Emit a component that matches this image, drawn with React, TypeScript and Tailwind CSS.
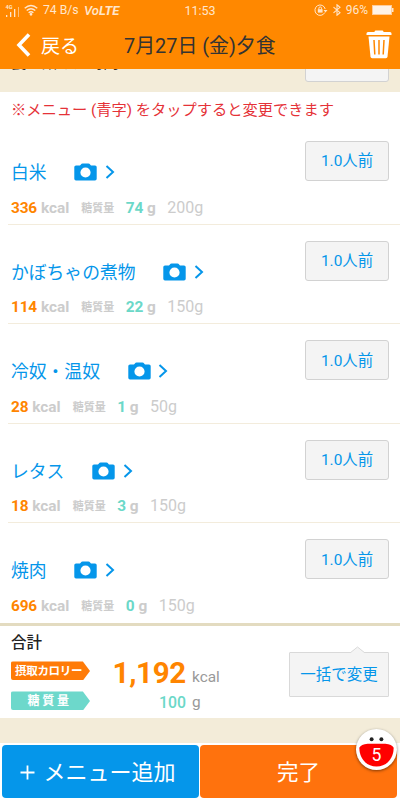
import { clsx } from 'clsx';

interface Meal {
  name: string;
  kcal: number;
  sugar: number;
  grams: number;
}

const MEALS: Meal[] = [
  { name: '白米', kcal: 336, sugar: 74, grams: 200 },
  { name: 'かぼちゃの煮物', kcal: 114, sugar: 22, grams: 150 },
  { name: '冷奴・温奴', kcal: 28, sugar: 1, grams: 50 },
  { name: 'レタス', kcal: 18, sugar: 3, grams: 150 },
  { name: '焼肉', kcal: 696, sugar: 0, grams: 150 },
];

function CameraIcon() {
  return (
    <svg width="23" height="18" viewBox="0 0 23 18" className="shrink-0">
      <path
        fill="#0596ea"
        fillRule="evenodd"
        d="M2 2.400H6L7.600.8Q8 .4 8.600.4h5.800Q15 .4 15.400.8L17 2.400h4a1.700 1.700 0 0 1 1.700 1.700v11.600a1.700 1.700 0 0 1-1.700 1.700H2a1.700 1.700 0 0 1-1.700-1.700v-11.600a1.700 1.700 0 0 1 1.700-1.700ZM11.500 4.400a5.100 5.100 0 1 0 0 10.200a5.100 5.100 0 1 0 0-10.200Z"
      />
    </svg>
  );
}

function MealRow({ meal, last }: { meal: Meal; last: boolean }) {
  return (
    <div className={clsx('ml-2 h-[99.6px] flex justify-between pl-[3px] pr-[11px]', !last && 'border-b border-[#f3ecdc]')}>
      <div>
        <div className="mt-[34px] h-[26px] flex items-center text-[#0596ea]">
          <span className="mt-[2px] text-[17.8px] leading-[26px]">{meal.name}</span>
          <div className="ml-[27.800px]">
            <CameraIcon />
          </div>
          <svg width="10" height="14" viewBox="0 0 10 14" className="ml-[7.500px]">
            <path d="M1.500 1L8 7L1.500 13" fill="none" stroke="currentColor" strokeWidth="2" />
          </svg>
        </div>
        <div className="mt-[12.500px] h-[20px] flex items-baseline font-bold text-[15.400px] leading-[20px] text-[#ccc]">
          <span className="text-[#ff8500] tracking-[-0.200px]">{meal.kcal}</span>
          <span className="ml-[4px]">kcal</span>
          <span className="ml-[12px] text-[11px] relative -top-px">糖質量</span>
          <span className="ml-[11.500px] text-[#6bd8c8] tracking-[-0.200px]">{meal.sugar}</span>
          <span className="ml-[4px]">g</span>
          <span className="ml-[11.500px] font-normal text-[16px]">{meal.grams}g</span>
        </div>
      </div>
      <button className="mt-[16px] pt-[2px] w-[84px] h-[40px] rounded-[3px] border border-[#d2d2d2] bg-[#f4f4f4] text-[#0596ea] text-[15.400px]">
        1.0人前
      </button>
    </div>
  );
}

function StatusBar() {
  return (
    <div className="h-[22px] flex items-center pl-[5px] pr-[6px] text-[12px] text-[#ffe6cc]">
      <svg width="16" height="14" viewBox="0 0 16 14">
        <text x="0.500" y="5" fontSize="5.500" fontWeight="700" fill="currentColor">4G</text>
        <g fill="currentColor">
          <path d="M1 11h1.300v2H1zM5 8h1.300v5H5zM9 5h1.300v8H9z" />
          <path d="M13 3h1v10h-1z" opacity=".6" />
        </g>
      </svg>
      <svg width="14" height="12" viewBox="0 0 14 12" className="ml-[3px] -mt-[2px]" fill="none" stroke="currentColor" strokeWidth="1.400">
        <path d="M.7 4.200Q7-1.200 13.300 4.200M2.700 6.500Q7 2.900 11.300 6.500M4.600 8.700Q7 6.800 9.400 8.700" />
        <circle cx="7" cy="10.300" r="0.700" fill="currentColor" />
      </svg>
      <span className="ml-[5px] w-[37px] -mt-px text-[12.200px] whitespace-nowrap">74 B/s</span>
      <span className="ml-[4px] w-[38px] italic font-bold text-[13px] whitespace-nowrap">
        <span className="font-medium">Vo</span>LTE
      </span>
      <span className="ml-[62.500px] text-[12.500px]">11:53</span>
      <div className="ml-auto -mt-[2px] flex items-center">
        <svg width="14" height="12" viewBox="0 0 14 12" fill="none" stroke="currentColor">
          <path d="M10.800 8.500A5.200 5.200 0 1 1 11.200 5" />
          <path d="M9.500 6h4L11.500 8.500Z" fill="currentColor" stroke="none" />
          <path d="M3.800 5.200h4.800v3.400H3.800z" fill="currentColor" stroke="none" />
          <path d="M4.900 5.500V4.200a1.300 1.300 0 0 1 2.600 0v1.300" />
        </svg>
        <svg width="10" height="12" viewBox="0 0 10 12" className="ml-[4px]" fill="none" stroke="currentColor" strokeWidth="1.100">
          <path d="M1.500 3.200L8 8.700L5 11.200V.8L8 3.300L1.500 8.800" />
        </svg>
        <span className="ml-[4px]">96%</span>
        <svg width="22" height="10" viewBox="0 0 22 10" className="ml-[4px]">
          <rect x=".5" y=".5" width="19" height="9" fill="#fff3e6" stroke="#ffcc99" />
          <path d="M20 3h1.500v4H20z" fill="currentColor" />
        </svg>
      </div>
    </div>
  );
}

function Header() {
  return (
    <header className="relative z-10 h-[69px] bg-[#ff8800]">
      <StatusBar />
      <div className="h-[47px] flex items-center pl-[16px] pr-[8px]">
        <svg width="15" height="24" viewBox="0 0 15 24" fill="none" stroke="#fff" strokeWidth="3.600" className="-mt-[2px]">
          <path d="M13 1.500L3 12L13 22.500" />
        </svg>
        <span className="ml-[10px] mt-[2px] text-[19px] leading-none text-white w-[83px]">戻る</span>
        <h1 className="mt-[2px] text-[19.900px] leading-none text-[#333] whitespace-nowrap">7月27日 (金)夕食</h1>
        <svg width="26" height="29" viewBox="0 0 26 29" className="ml-auto -mt-[3px]">
          <path
            fill="#fff"
            d="M9.500.5h7Q17.500.5 17.500 2H24q1.500 0 1.500 1.500V5H.5V3.500Q.5 2 2 2h6.500Q8.500.5 9.500.5Z"
          />
          <path fill="#fff" d="M2.500 6.500h21l-2 20.300q-.2 1.400-1.600 1.400H6.100q-1.400 0-1.600-1.400Z" />
          <path d="M8 10l.8 14.500M13 10v14.500M18 10l-.8 14.500" stroke="#ff8800" strokeWidth="1.500" fill="none" />
        </svg>
      </div>
    </header>
  );
}

function ArrowLabel({ text, tone }: { text: string; tone: 'calorie' | 'sugar' }) {
  return (
    <div
      className={clsx(
        'w-[79px] h-[19px] rounded-[2px] [clip-path:polygon(0_0,91%_0,100%_50%,91%_100%,0_100%)] text-white font-bold leading-[20px]',
        tone === 'calorie' ? 'bg-[#ff7b08] text-[11.500px] pl-[4px] tracking-[-0.300px]' : 'bg-[#6dd8cb] text-[12px] pl-[16.500px] tracking-[2.800px]'
      )}
    >
      <span className="block whitespace-nowrap">{text}</span>
    </div>
  );
}

function Total() {
  return (
    <section className="relative h-[95px] border-t-[3px] border-[#e3dbc0] px-[11px]">
      <h2 className="pt-[5px] text-[15.500px] leading-[24px] font-medium text-[#222]">合計</h2>
      <div className="mt-px h-[30px] flex items-center">
        <ArrowLabel text="摂取カロリー" tone="calorie" />
        <div className="mt-[4px] w-[96px] text-right text-[29.500px] tracking-[-0.300px] font-bold text-[#ff8500] leading-[30px]">
          1,192
        </div>
        <span className="ml-[6px] mt-[14px] text-[15.400px] text-[#999]">kcal</span>
      </div>
      <div className="h-[30px] flex items-center">
        <ArrowLabel text="糖質量" tone="sugar" />
        <div className="w-[96px] text-right text-[15.800px] font-medium text-[#6bd8c8] mt-[4px]">100</div>
        <span className="ml-[6px] mt-[4px] text-[15.400px] text-[#999]">g</span>
      </div>
      <div className="absolute right-[11px] top-[20px]">
        <svg width="100" height="7" viewBox="0 0 100 7" className="relative z-10 -mb-px block">
          <path d="M61 7L68.500 1L76 7" fill="#f4f4f4" stroke="#d9d9d9" />
        </svg>
        <button className="block pt-[2px] w-[100px] h-[45px] rounded-[1px] border border-[#d9d9d9] bg-[#f4f4f4] text-[#0596ea] text-[15.500px]">
          一括で変更
        </button>
      </div>
    </section>
  );
}

function FaceBadge() {
  return (
    <div className="absolute left-[355.500px] top-[-14px] w-[41px] h-[41px] rounded-full bg-white shadow-[0_1px_3px_rgba(0,0,0,0.5)]">
      <svg width="41" height="41" viewBox="0 0 42 42">
        <circle cx="16" cy="10.500" r="2" fill="#222" />
        <circle cx="26" cy="10.500" r="2" fill="#222" />
        <path d="M3.500 19Q5 15.500 12 15h18Q37 15.500 38.500 19C39 29 32 38.500 21 38.500S3 29 3.500 19Z" fill="#f00" />
        <text x="21" y="32.500" textAnchor="middle" fontSize="18" fill="#fff">5</text>
      </svg>
    </div>
  );
}

export default function App() {
  return (
    <div className="w-[400px] h-[800px] overflow-hidden flex flex-col bg-white font-[Roboto,'Noto_Sans_CJK_JP',sans-serif]">
      <Header />

      {/* tail of the previous section, scrolled under the header */}
      <div className="h-[23px] bg-[#f3ecd9] flex justify-between pl-[11px] pr-[11px]">
        <span className="-mt-[14px] h-[16px] text-[15.400px] leading-[16px] text-[#333]">食べ始めた時間</span>
        <div className="-mt-[27px] w-[84px] h-[40px] rounded-[3px] border border-[#d2d2d2] bg-[#f4f4f4]" />
      </div>

      <p className="h-[33px] pl-[11px] text-[15.250px] leading-[36px] text-[#e53238] whitespace-nowrap">
        ※メニュー (青字) をタップすると変更できます
      </p>

      <main>
        {MEALS.map((meal, i) => (
          <MealRow key={meal.name} meal={meal} last={i === MEALS.length - 1} />
        ))}
      </main>

      <Total />
      <div className="h-[25px] shrink-0 bg-[#f3ecd9]" />

      <footer className="relative flex-1 pt-[2px] px-[2px] flex gap-[1px] text-white text-[21.500px]">
        <button className="w-[197px] h-[53px] pt-[3px] pr-[5px] rounded-[4px] bg-[#0596ea] flex items-center justify-center text-[22px]">
          <svg width="15" height="15" viewBox="0 0 15 15" className="mr-[8px] -mt-px">
            <path d="M7.500.5v14M.5 7.500h14" stroke="#fff" strokeWidth="1.800" />
          </svg>
          <span>メニュー追加</span>
        </button>
        <button className="w-[197px] h-[53px] pt-[3px] rounded-[4px] bg-[#ff720d]">完了</button>
        <FaceBadge />
      </footer>
    </div>
  );
}
